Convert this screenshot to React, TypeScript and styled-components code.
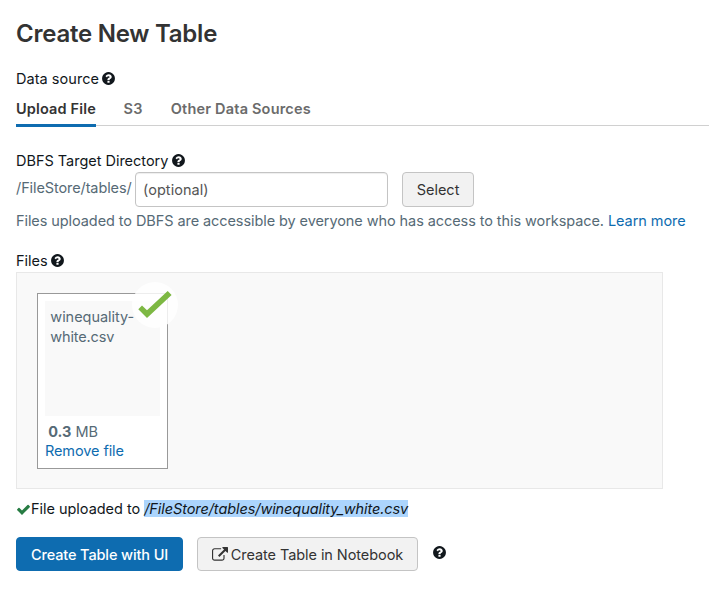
import React from 'react';
import styled, { createGlobalStyle } from 'styled-components';

const GlobalStyle = createGlobalStyle`
  * { box-sizing: border-box; }
  body {
    margin: 0;
    background: #fff;
    color: #11171c;
    font: 400 14.5px/20px Inter, "Liberation Sans", sans-serif;
    overflow: hidden;
  }
`;

const Page = styled.main`
  display: flex;
  flex-direction: column;
  align-items: flex-start;
  padding: 19px 0 0 16px;
  height: 597px;
`;

const Title = styled.h1`
  margin: 0 0 20px;
  font-size: 24px;
  line-height: 30px;
  font-weight: 600;
  letter-spacing: -0.24px;
  color: #333;
`;

const Text = styled.span<{ $track?: number }>`
  letter-spacing: ${(p) => p.$track ?? 0}px;
  white-space: pre;
`;

const Label = styled.div`
  display: flex;
  align-items: center;
  gap: 2.4px;
  height: 20px;
`;

const Icon = styled.svg`
  display: block;
  flex: none;
  fill: currentColor;
`;

const HelpGlyph = styled(Icon)<{ $lift?: number }>`
  margin-bottom: ${(p) => p.$lift ?? 1}px;
`;

const Tabs = styled.nav`
  display: flex;
  align-self: stretch;
  align-items: flex-start;
  gap: 27.4px;
  height: 27px;
  margin: 10px 0 25px;
  border-bottom: 1px solid #d0d0d0;
`;

const Tab = styled.a<{ $active?: boolean; $track: number; $width: number }>`
  flex: none;
  width: ${(p) => p.$width}px;
  height: 28px;
  font-weight: 600;
  white-space: nowrap;
  letter-spacing: ${(p) => p.$track}px;
  color: ${(p) => (p.$active ? '#333' : '#6b6b6b')};
  border-bottom: ${(p) => (p.$active ? '3px solid #0e6cb0' : '0')};
`;

const DirectoryRow = styled.div`
  display: flex;
  align-items: center;
  height: 35px;
  margin: 1px 0 4px;
`;

const Prefix = styled.label`
  width: 119px;
  margin-top: -3px;
  color: #566a76;
  letter-spacing: -0.1px;
`;

const DirectoryInput = styled.input`
  width: 253px;
  height: 35px;
  margin-right: 14px;
  padding: 0 7px;
  border: 1px solid #c4c4c4;
  border-radius: 4px;
  box-shadow: inset 0 1px 1px rgba(0, 0, 0, 0.07);
  background: #fff;
  font: inherit;
  outline: none;
  letter-spacing: 0.05px;
  &::placeholder { color: #555; opacity: 1; }
`;

const Button = styled.button<{ $primary?: boolean; $width: number; $height: number }>`
  display: inline-flex;
  align-items: center;
  justify-content: center;
  gap: 3px;
  width: ${(p) => p.$width}px;
  height: ${(p) => p.$height}px;
  padding: 1px 0 0;
  border: 1px solid ${(p) => (p.$primary ? '#0e6cb0' : '#c4c4c4')};
  border-radius: 4px;
  background: ${(p) => (p.$primary ? '#0e6cb0' : '#f2f2f2')};
  color: ${(p) => (p.$primary ? '#fff' : '#333')};
  font: inherit;
  font-weight: ${(p) => (p.$primary ? 500 : 400)};
`;

const Hint = styled.p`
  margin: 0 0 20px;
  color: #566a76;
  white-space: nowrap;
  letter-spacing: -0.08px;
`;

const Link = styled.a<{ $track?: number }>`
  color: #0e6cb0;
  text-decoration: none;
  letter-spacing: ${(p) => p.$track ?? 0}px;
`;

const DropZone = styled.section`
  width: 647px;
  height: 217px;
  margin: 1px 0 10px;
  padding: 20px;
  border: 1px solid #e8e8e8;
  background: #f9f9f9;
`;

const FileCard = styled.article`
  position: relative;
  display: flex;
  flex-direction: column;
  width: 131px;
  height: 176px;
  padding: 7px;
  border: 1px solid #999;
  background: #fff;
  color: #566a76;
`;

const Thumbnail = styled.div`
  display: flex;
  flex-direction: column;
  height: 115px;
  margin-bottom: 6px;
  padding: 6px 0 0 5.3px;
  background: #f9f9f9;
`;

const FileSize = styled.div`
  height: 19px;
  padding-left: 3.2px;
  white-space: pre;
`;

const DoneMark = styled.div`
  position: absolute;
  top: -12px;
  left: 94px;
  width: 46px;
  height: 46px;
  border-radius: 50%;
  background: rgba(255, 255, 255, 0.82);
`;

const Status = styled.div`
  display: flex;
  align-items: center;
  height: 20px;
  margin-bottom: 18px;
  white-space: pre;
`;

const UploadedPath = styled.em`
  width: 264px;
  height: 17px;
  margin-bottom: 1px;
  line-height: 17px;
  background: #acd5fd;
  letter-spacing: -0.085px;
`;

const Actions = styled.div`
  display: flex;
  align-items: center;
  gap: 14px;
`;

const HelpIcon = ({ lift }: { lift?: number }) => (
  <HelpGlyph $lift={lift} width="15" height="15" viewBox="0 0 1792 1792">
    <path d="M1024 1376v-192q0-14-9-23t-23-9h-192q-14 0-23 9t-9 23v192q0 14 9 23t23 9h192q14 0 23-9t9-23zm256-672q0-88-55.5-163t-138.5-116-170-41q-243 0-371 213-15 24 8 42l132 100q7 6 19 6 16 0 25-12 53-68 86-92 34-24 86-24 48 0 85.5 26t37.5 59q0 38-20 61t-68 45q-63 28-115.5 86.5t-52.5 125.5v36q0 14 9 23t23 9h192q14 0 23-9t9-23q0-19 21.5-49.5t54.5-49.5q32-18 49-28.5t46-35 44.5-48 28-60.5 12.5-81zm384 192q0 209-103 385.5t-279.5 279.5-385.5 103-385.5-103-279.5-279.5-103-385.5 103-385.5 279.5-279.5 385.5-103 385.5 103 279.5 279.5 103 385.5z" />
  </HelpGlyph>
);

const ExternalIcon = () => (
  <Icon width="16" height="16" viewBox="0 0 1792 1792">
    <path d="M1408 928v320q0 119-84.5 203.5t-203.5 84.5h-832q-119 0-203.5-84.5t-84.5-203.5v-832q0-119 84.5-203.5t203.5-84.5h704q14 0 23 9t9 23v64q0 14-9 23t-23 9h-704q-66 0-113 47t-47 113v832q0 66 47 113t113 47h832q66 0 113-47t47-113v-320q0-14 9-23t23-9h64q14 0 23 9t9 23zm384-864v512q0 26-19 45t-45 19-45-19l-176-176-652 652q-10 10-23 10t-23-10l-114-114q-10-10-10-23t10-23l652-652-176-176q-19-19-19-45t19-45 45-19h512q26 0 45 19t19 45z" />
  </Icon>
);

const CheckIcon = () => (
  <Icon width="15" height="15" viewBox="0 0 1792 1792" color="#277c43">
    <path d="M1671 566q0 40-28 68l-724 724-136 136q-28 28-68 28t-68-28l-136-136-362-362q-28-28-28-68t28-68l136-136q28-28 68-28t68 28l294 295 656-657q28-28 68-28t68 28l136 136q28 28 28 68z" />
  </Icon>
);

export default function App() {
  return (
    <>
      <GlobalStyle />
      <Page>
        <Title>Create New Table</Title>
        <Label>
          <Text $track={0.04}>Data source</Text>
          <HelpIcon />
        </Label>
        <Tabs>
          <Tab $active $width={80} $track={0.15}>Upload File</Tab>
          <Tab $width={20} $track={0.4}>S3</Tab>
          <Tab $width={141} $track={0.19}>Other Data Sources</Tab>
        </Tabs>
        <Label>
          <Text $track={-0.02}>DBFS Target Directory</Text>
          <HelpIcon />
        </Label>
        <DirectoryRow>
          <Prefix htmlFor="directory">/FileStore/tables/</Prefix>
          <DirectoryInput id="directory" placeholder="(optional)" />
          <Button $width={72} $height={35}>Select</Button>
        </DirectoryRow>
        <Hint>
          Files uploaded to DBFS are accessible by everyone who has access to this workspace.{' '}
          <Link $track={-0.06}>Learn more</Link>
        </Hint>
        <Label>
          <Text>Files</Text>
          <HelpIcon />
        </Label>
        <DropZone>
          <FileCard>
            <Thumbnail>
              <Text $track={-0.03}>winequality-</Text>
              <Text $track={-0.16}>white.csv</Text>
            </Thumbnail>
            <FileSize>
              <b>0.3</b> <Text>MB</Text>
            </FileSize>
            <Link $track={-0.1}>Remove file</Link>
            <DoneMark>
              <Icon width="46" height="46" viewBox="0 0 46 46" color="#7db843">
                <path d="M6.3 27.3 10 23.4 15 28.3 35.7 9 39.6 13 15 36Z" />
              </Icon>
            </DoneMark>
          </FileCard>
        </DropZone>
        <Status>
          <CheckIcon />
          <Text $track={-0.03}>File uploaded to </Text>
          <UploadedPath>/FileStore/tables/winequality_white.csv</UploadedPath>
        </Status>
        <Actions>
          <Button $primary $width={167} $height={34}>
            <Text $track={-0.12}>Create Table with UI</Text>
          </Button>
          <Button $width={221} $height={34}>
            <ExternalIcon />
            <Text $track={-0.07}>Create Table in Notebook</Text>
          </Button>
          <HelpIcon lift={3} />
        </Actions>
      </Page>
    </>
  );
}
